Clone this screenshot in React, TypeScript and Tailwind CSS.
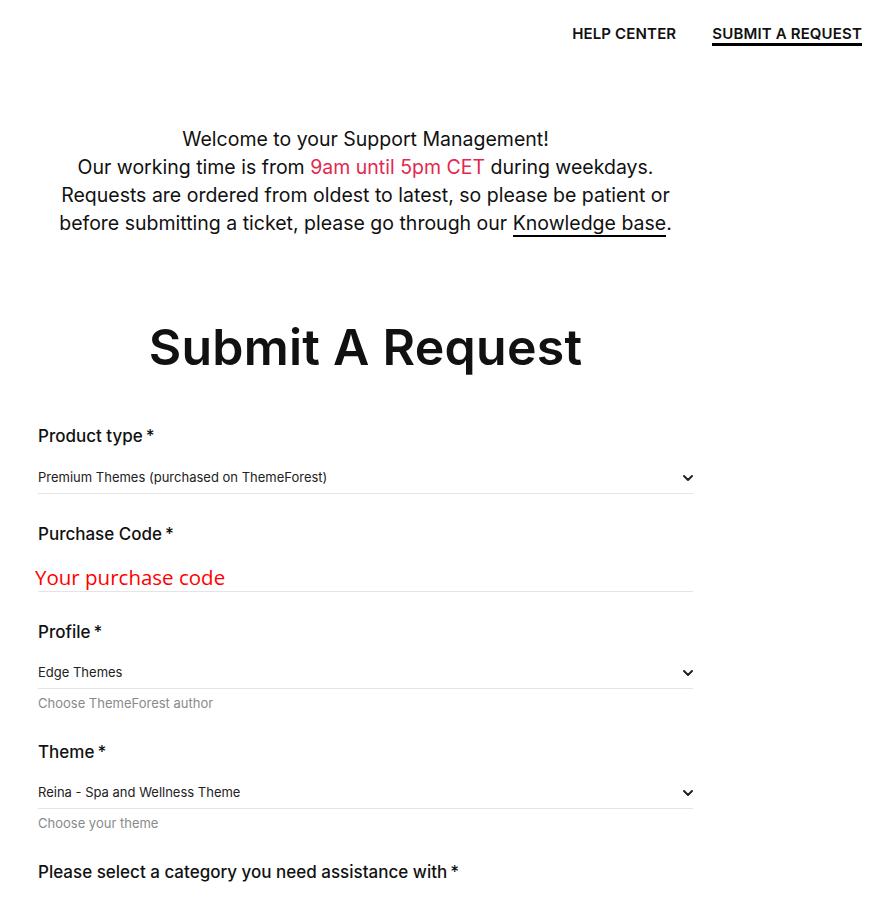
import { ChevronDown } from "lucide-react";

const font = { fontFamily: "Inter, 'Noto Sans', sans-serif" };

function Label({ text }: { text: string }) {
  return (
    <label className="block text-[17px] leading-6 font-medium text-[#111]">
      {text}
      <span className="ml-[3px]">*</span>
    </label>
  );
}

function SelectField({ label, value, help }: { label: string; value: string; help?: string }) {
  return (
    <div className="mb-7">
      <Label text={label} />
      <div
        className={
          help
            ? "mt-[13px] h-8 flex items-center justify-between border-b border-[#e4e4e4]"
            : "mt-[14px] h-8 flex items-center justify-between border-b border-[#e4e4e4]"
        }
      >
        <span className="text-[13px] text-[#222]">{value}</span>
        <ChevronDown size={16} strokeWidth={3} className="text-[#222] -mr-[3px]" />
      </div>
      {help && <p className="mt-[5px] text-[13px] leading-[18px] text-[#8a8a8a]">{help}</p>}
    </div>
  );
}

export default function App() {
  return (
    <div className="min-h-screen bg-white text-[#111]" style={font}>
      <header className="flex items-start justify-end gap-9 pr-4 pt-[24px] h-[60px]">
        <a className="text-[15px] font-semibold tracking-[0.01em] leading-5">HELP CENTER</a>
        <a className="text-[15px] font-semibold tracking-[0.01em] leading-[19px] border-b-[3px] border-black">
          SUBMIT A REQUEST
        </a>
      </header>

      <main className="ml-[38px] w-[655px]">
        <div className="mt-[65px] text-center text-[19.5px] leading-7 text-[#111]">
          <p>Welcome to your Support Management!</p>
          <p>
            Our working time is from <span className="text-[#e3284f]">9am until 5pm CET</span> during weekdays.
          </p>
          <p>Requests are ordered from oldest to latest, so please be patient or</p>
          <p>
            before submitting a ticket, please go through our{" "}
            <a className="border-b-2 border-black">Knowledge base</a>.
          </p>
        </div>

        <h1 className="mt-[82px] text-center text-[50px] leading-[56px] font-semibold tracking-[0.005em]">
          Submit A Request
        </h1>

        <form className="mt-[49px]">
          <SelectField label="Product type" value="Premium Themes (purchased on ThemeForest)" />

          <div className="mb-7">
            <Label text="Purchase Code" />
            <div className="mt-[14px] h-8 border-b border-[#e4e4e4]">
              <input
                placeholder="Your purchase code"
                className="w-full -ml-[3px] pt-[3px] bg-transparent outline-none text-[20.5px] leading-[28px] placeholder:text-[#ff0000]"
                style={{ fontFamily: "'Open Sans', sans-serif" }}
              />
            </div>
          </div>

          <SelectField label="Profile" value="Edge Themes" help="Choose ThemeForest author" />
          <SelectField label="Theme" value="Reina - Spa and Wellness Theme" help="Choose your theme" />

          <Label text="Please select a category you need assistance with" />
        </form>
      </main>
    </div>
  );
}
